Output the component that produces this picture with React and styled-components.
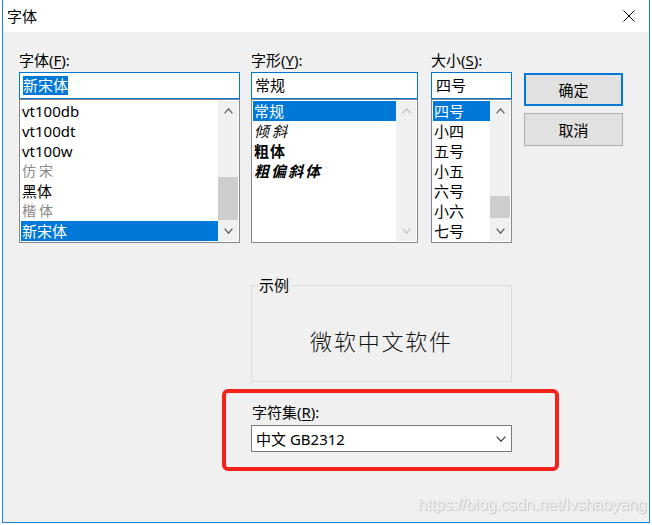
import React from 'react';
import styled, { createGlobalStyle, css } from 'styled-components';

const UI_FONT = '"Noto Sans", "Noto Sans CJK SC", sans-serif';

const GlobalStyle = createGlobalStyle`
  html, body {
    margin: 0;
    padding: 0;
    background: #ffffff;
  }
  body {
    font-family: ${UI_FONT};
    font-size: 15px;
    color: #000;
  }
`;

const Dialog = styled.div`
  position: relative;
  box-sizing: border-box;
  width: 648px;
  height: 523px;
  margin-left: 2px;
  border: 1px solid #1883d7;
  border-top: none;
  background: #f0f0f0;
  display: flex;
  flex-direction: column;
`;

const TitleBar = styled.div`
  height: 32px;
  flex: none;
  background: #ffffff;
  display: flex;
  align-items: center;
  justify-content: space-between;
  padding-left: 4px;
`;

const Title = styled.span`
  font-size: 15px;
  line-height: 20px;
`;

const CloseButton = styled.div`
  width: 12px;
  height: 12px;
  margin-right: 14px;
  display: flex;
`;

const Body = styled.div`
  flex: 1;
  padding: 18px 0 0 16px;
  display: flex;
  flex-direction: column;
`;

const TopRow = styled.div`
  display: flex;
  align-items: flex-start;
`;

const Column = styled.div`
  width: ${({ $w }) => $w}px;
  margin-left: ${({ $ml }) => $ml || 0}px;
  display: flex;
  flex-direction: column;
`;

const FieldLabel = styled.div`
  line-height: 20px;
  height: 20px;
  margin-bottom: ${({ $mb }) => ($mb === undefined ? 2 : $mb)}px;
  padding-left: ${({ $pl }) => $pl || 0}px;
  white-space: nowrap;
`;

const Key = styled.span`
  text-decoration: underline;
  text-underline-offset: 2px;
`;

const TextBox = styled.div`
  box-sizing: border-box;
  height: 27px;
  border: 1px solid #0078d7;
  background: #ffffff;
  padding-left: ${({ $pad }) => $pad || 3}px;
  display: flex;
  align-items: center;
  line-height: 19px;
`;

const Selection = styled.span`
  background: #0078d7;
  color: #ffffff;
  line-height: 19px;
`;

const ListBox = styled.div`
  box-sizing: border-box;
  height: 144px;
  border: 1px solid #828790;
  background: #ffffff;
  padding: 1px;
  display: flex;
`;

const Items = styled.div`
  flex: 1;
  min-width: 0;
  display: flex;
  flex-direction: column;
`;

const Item = styled.div`
  height: 20px;
  line-height: 20px;
  padding-left: 1px;
  white-space: nowrap;
  overflow: hidden;
  ${({ $selected }) =>
    $selected &&
    css`
      background: #0078d7;
      color: #ffffff;
    `}
  ${({ $muted }) =>
    $muted &&
    css`
      color: #8a8a8a;
      font-size: 14px;
      letter-spacing: 3px;
    `}
  font-style: ${({ $italic }) => ($italic ? 'italic' : 'normal')};
  font-weight: ${({ $bold }) => ($bold ? 700 : 400)};
  ${({ $spacing }) => $spacing && css`letter-spacing: ${$spacing}px;`}
`;

const ScrollBar = styled.div`
  width: 20px;
  flex: none;
  background: #f0f0f0;
  display: flex;
  flex-direction: column;
`;

const ArrowButton = styled.div`
  height: 20px;
  flex: none;
  display: flex;
  align-items: center;
  justify-content: center;
`;

const Track = styled.div`
  flex: 1;
  display: flex;
  flex-direction: column;
`;

const Thumb = styled.div`
  margin-top: ${({ $top }) => $top}px;
  height: ${({ $h }) => $h}px;
  background: #cdcdcd;
`;

const ButtonColumn = styled.div`
  margin-left: 12px;
  margin-top: 23px;
  display: flex;
  flex-direction: column;
  gap: 7px;
`;

const DialogButton = styled.button`
  box-sizing: border-box;
  width: 99px;
  height: 33px;
  background: #e1e1e1;
  border: ${({ $default }) => ($default ? '2px solid #0078d7' : '1px solid #adadad')};
  font-family: ${UI_FONT};
  font-size: 15px;
  color: #000;
  padding: 0;
`;

const Lower = styled.div`
  margin-left: 203px;
  display: flex;
  flex-direction: column;
  align-items: flex-start;
`;

const SampleGroup = styled.fieldset`
  box-sizing: border-box;
  width: 261px;
  margin: 32px 0 0 29px;
  padding: 0;
  border: 1px solid #dcdcdc;
  min-inline-size: 0;
`;

const SampleLegend = styled.legend`
  margin-left: 6px;
  padding: 0 1px;
  line-height: 20px;
  font-size: 15px;
`;

const SampleText = styled.div`
  height: 86px;
  display: flex;
  align-items: center;
  justify-content: center;
  padding-top: 4px;
  box-sizing: border-box;
  font-family: "Noto Sans CJK SC", sans-serif;
  font-weight: 300;
  font-size: 22px;
  letter-spacing: 1.8px;
  color: #141414;
`;

const Highlight = styled.div`
  box-sizing: border-box;
  width: 337px;
  height: 82px;
  margin-top: 7px;
  border: 4px solid #f5221b;
  border-radius: 6px;
  padding: 9px 0 0 25px;
`;

const Select = styled.div`
  box-sizing: border-box;
  width: 261px;
  height: 27px;
  border: 1px solid #7a7a7a;
  background: #ffffff;
  display: flex;
  align-items: center;
  justify-content: space-between;
  padding: 0 5px 0 4px;
  line-height: 20px;
`;

const Watermark = styled.div`
  position: absolute;
  left: 415px;
  top: 495px;
  font-family: "Liberation Sans", Arial, sans-serif;
  font-size: 16px;
  line-height: 20px;
  color: rgba(255, 255, 255, 0.92);
  text-shadow: 1px 1px 1px rgba(0, 0, 0, 0.18), 0 0 1px rgba(0, 0, 0, 0.2);
  white-space: nowrap;
  pointer-events: none;
`;

const Chevron = ({ up, color = '#606060', w = 9, h = 6 }) => (
  <svg width={w} height={h} viewBox={`0 0 ${w} ${h}`}>
    <polyline
      points={up ? `0.6,${h - 0.6} ${w / 2},0.8 ${w - 0.6},${h - 0.6}` : `0.6,0.6 ${w / 2},${h - 0.8} ${w - 0.6},0.6`}
      fill="none"
      stroke={color}
      strokeWidth="1.3"
    />
  </svg>
);

const Scroll = ({ thumb, disabled }) => {
  const color = disabled ? '#c2c2c2' : '#606060';
  return (
    <ScrollBar>
      <ArrowButton><Chevron up color={color} /></ArrowButton>
      <Track>{thumb && <Thumb $top={thumb.top} $h={thumb.h} />}</Track>
      <ArrowButton><Chevron color={color} /></ArrowButton>
    </ScrollBar>
  );
};

const fonts = [
  { label: 'vt100db' },
  { label: 'vt100dt' },
  { label: 'vt100w' },
  { label: '仿宋', muted: true },
  { label: '黑体' },
  { label: '楷体', muted: true },
  { label: '新宋体', selected: true },
];

const styles = [
  { label: '常规', selected: true },
  { label: '倾斜', italic: true, spacing: 3 },
  { label: '粗体', bold: true, spacing: 1 },
  { label: '粗偏斜体', bold: true, italic: true, spacing: 2 },
];

const sizes = ['四号', '小四', '五号', '小五', '六号', '小六', '七号'];

export default function App() {
  return (
    <>
      <GlobalStyle />
      <Dialog>
        <TitleBar>
          <Title>字体</Title>
          <CloseButton>
            <svg width="12" height="12" viewBox="0 0 12 12">
              <path d="M0.5 0.5 L11.5 11.5 M11.5 0.5 L0.5 11.5" stroke="#000" strokeWidth="1" />
            </svg>
          </CloseButton>
        </TitleBar>
        <Body>
          <TopRow>
            <Column $w={221}>
              <FieldLabel>字体(<Key>F</Key>):</FieldLabel>
              <TextBox><Selection>新宋体</Selection></TextBox>
              <ListBox>
                <Items>
                  {fonts.map((f) => (
                    <Item key={f.label} $selected={f.selected} $muted={f.muted}>{f.label}</Item>
                  ))}
                </Items>
                <Scroll thumb={{ top: 56, h: 43 }} />
              </ListBox>
            </Column>
            <Column $w={167} $ml={11}>
              <FieldLabel>字形(<Key>Y</Key>):</FieldLabel>
              <TextBox>常规</TextBox>
              <ListBox>
                <Items>
                  {styles.map((s) => (
                    <Item
                      key={s.label}
                      $selected={s.selected}
                      $italic={s.italic}
                      $bold={s.bold}
                      $spacing={s.spacing}
                    >
                      {s.label}
                    </Item>
                  ))}
                </Items>
                <Scroll disabled />
              </ListBox>
            </Column>
            <Column $w={81} $ml={13}>
              <FieldLabel>大小(<Key>S</Key>):</FieldLabel>
              <TextBox $pad={4}>四号</TextBox>
              <ListBox>
                <Items>
                  {sizes.map((s, i) => (
                    <Item key={s} $selected={i === 0}>{s}</Item>
                  ))}
                </Items>
                <Scroll thumb={{ top: 75, h: 22 }} />
              </ListBox>
            </Column>
            <ButtonColumn>
              <DialogButton $default>确定</DialogButton>
              <DialogButton>取消</DialogButton>
            </ButtonColumn>
          </TopRow>
          <Lower>
            <SampleGroup>
              <SampleLegend>示例</SampleLegend>
              <SampleText>微软中文软件</SampleText>
            </SampleGroup>
            <Highlight>
              <FieldLabel $mb={3} $pl={1}>字符集(<Key>R</Key>):</FieldLabel>
              <Select>
                <span>中文 GB2312</span>
                <Chevron color="#444" w={10} h={6} />
              </Select>
            </Highlight>
          </Lower>
        </Body>
        <Watermark>https://blog.csdn.net/lvshaoyang</Watermark>
      </Dialog>
    </>
  );
}
